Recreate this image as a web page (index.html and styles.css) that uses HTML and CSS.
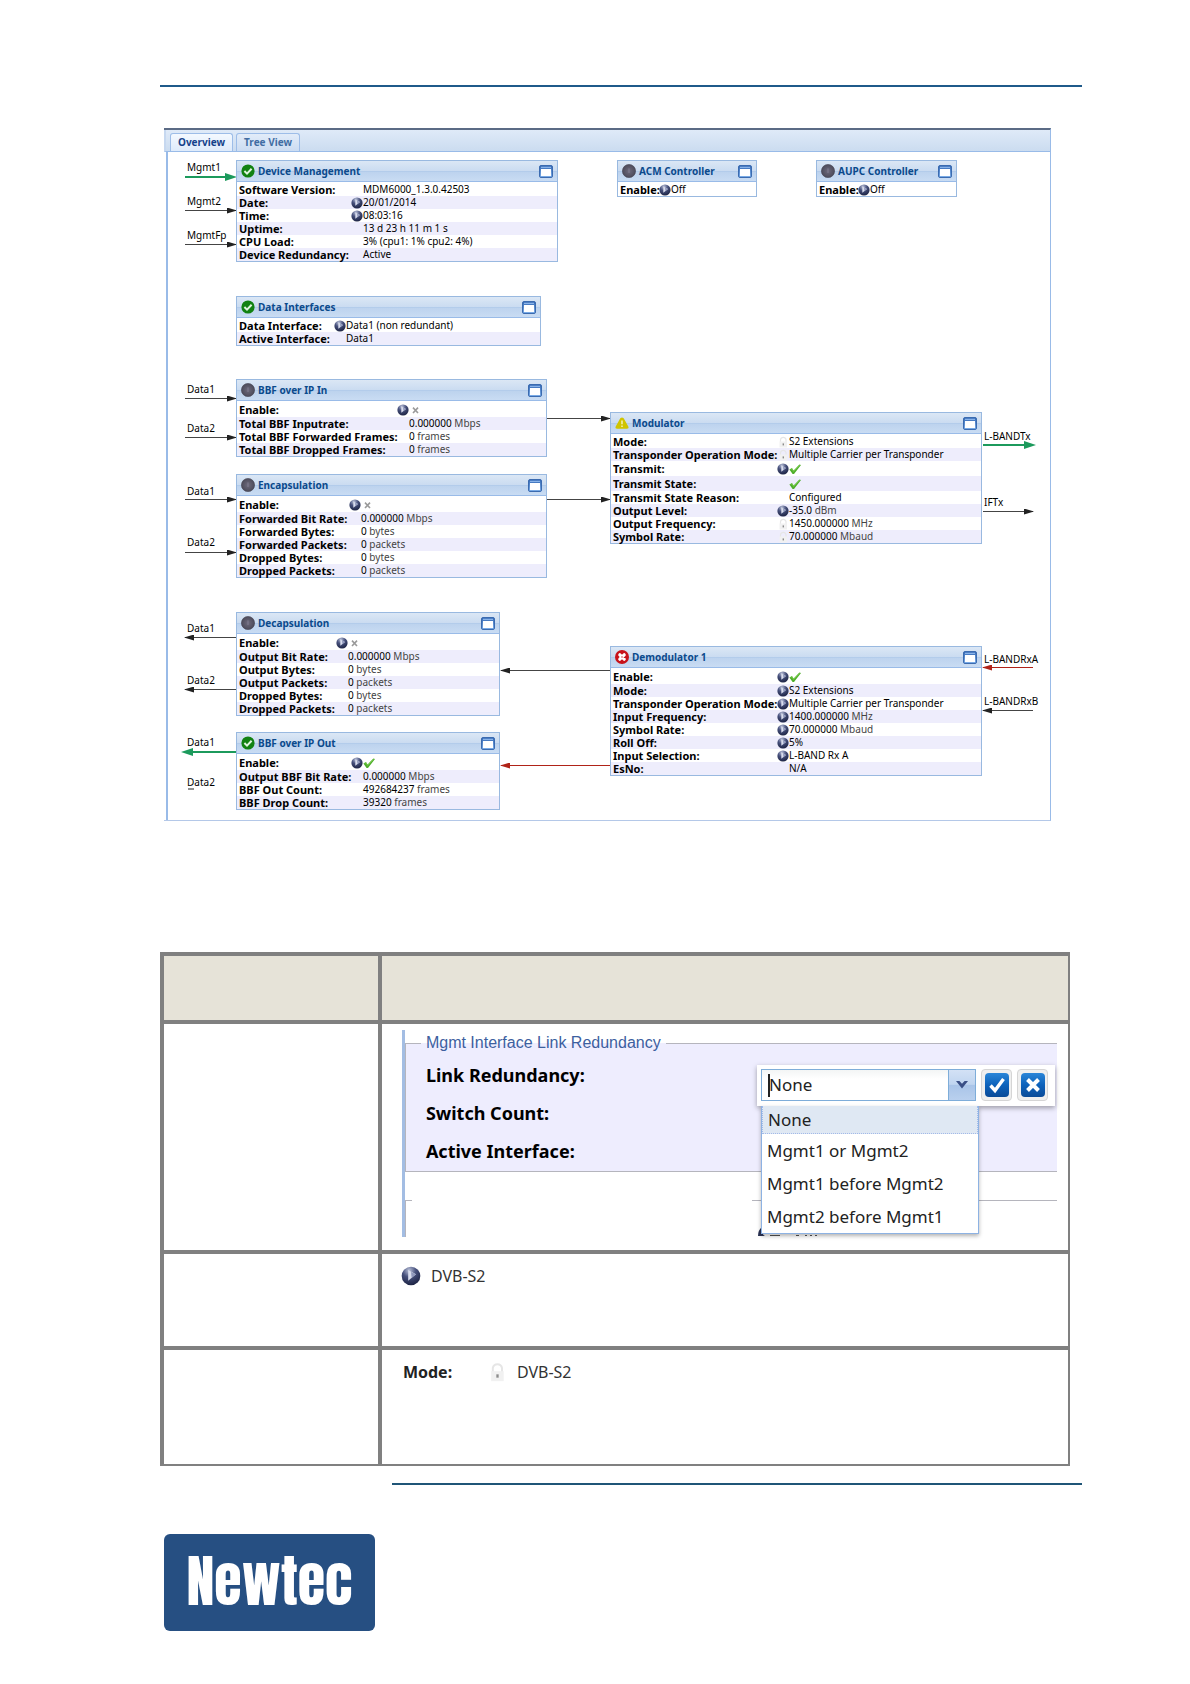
FILE: index.html
```html
<!DOCTYPE html>
<html lang="en">

<head>
    <meta charset="UTF-8">
    <meta name="viewport" content="width=device-width, initial-scale=1.0">
    <title>Newtec MDM6000 - Overview</title>
    <link rel="stylesheet" href="styles.css">
</head>

<body>
    <!-- shared icons -->
    <svg class="icon_defs" aria-hidden="true">
        <defs>
            <linearGradient id="gWin" x1="0" y1="0" x2="0" y2="1">
                <stop offset="0" stop-color="#3468b4" />
                <stop offset="1" stop-color="#7fb0ea" />
            </linearGradient>
            <radialGradient id="gBall" cx="0.4" cy="0.2" r="0.8">
                <stop offset="0" stop-color="#b9c0d8" />
                <stop offset="0.45" stop-color="#46507c" />
                <stop offset="1" stop-color="#1d2444" />
            </radialGradient>
            <radialGradient id="gOff" cx="0.5" cy="0.5" r="0.5">
                <stop offset="0" stop-color="#6d6a7c" />
                <stop offset="1" stop-color="#4d4b5a" />
            </radialGradient>
            <linearGradient id="gBtn" x1="0" y1="0" x2="0" y2="1">
                <stop offset="0" stop-color="#2a86d8" />
                <stop offset="0.5" stop-color="#0d62bb" />
                <stop offset="1" stop-color="#0a4b98" />
            </linearGradient>
            <symbol id="ok" viewBox="0 0 14 14">
                <circle cx="7" cy="7" r="6.6" fill="#128212" />
                <path d="M3.4 7 L6 9.6 L10.6 4.8" fill="none" stroke="#dff5df" stroke-width="2" />
            </symbol>
            <symbol id="off" viewBox="0 0 14 14">
                <circle cx="7" cy="7" r="6.6" fill="url(#gOff)" stroke="#474554" stroke-width="0.6" />
                <path d="M7 4.4 V9" stroke="#807d90" stroke-width="1" />
            </symbol>
            <symbol id="warn" viewBox="0 0 16 14">
                <path d="M8 0.6 C9.2 0.6 10 1.4 10.6 2.6 L15.2 11 C15.9 12.6 15.2 13.6 13.6 13.6 H2.4 C0.8 13.6 0.1 12.6 0.8 11 L5.4 2.6 C6 1.4 6.8 0.6 8 0.6 Z" fill="#d0c400" />
                <path d="M8 4 V8.4 M8 9.8 V11.6" stroke="#f4efb0" stroke-width="1.8" />
            </symbol>
            <symbol id="err" viewBox="0 0 14 14">
                <circle cx="7" cy="7" r="7" fill="#c8131b" />
                <path d="M4.8 4.8 L9.2 9.2 M9.2 4.8 L4.8 9.2" stroke="#fff" stroke-width="3.2" stroke-linecap="round" />
                <circle cx="7" cy="7" r="1" fill="#e58a8e" />
            </symbol>
            <symbol id="win" viewBox="0 0 14 13">
                <rect x="0.5" y="0.5" width="13" height="12" rx="1.5" fill="url(#gWin)" stroke="#3b6bb0" />
                <rect x="2" y="4" width="10" height="7" fill="#fff" />
                <path d="M2 2.3 H12" stroke="#9cc4f4" stroke-width="1" />
            </symbol>
            <symbol id="play" viewBox="0 0 12 12">
                <circle cx="6" cy="6" r="5.6" fill="url(#gBall)" />
                <path d="M4.3 2.4 L9 5 L4.3 8.8 Z" fill="#d9dded" />
                <path d="M6 3.6 L9 5 L6.4 7 Z" fill="#8f98bb" />
            </symbol>
            <symbol id="lock" viewBox="0 0 12 12">
                <path d="M3.5 6 V3.6 A2.8 2.8 0 0 1 9 3.6 V6" fill="none" stroke="#e6e6e6" stroke-width="1.2" />
                <rect x="2.5" y="5.5" width="7.5" height="6" fill="#f1f1f1" />
                <rect x="5.6" y="7.4" width="1.4" height="2" fill="#8c8c8c" />
            </symbol>
            <symbol id="tick" viewBox="0 0 12 12">
                <path d="M0.4 6.4 L3 5 L4.6 7.4 L10.4 1.4 L12 2 L5 11 L3.6 11 Z" fill="#4fae2b" />
                <path d="M1.6 6.4 L2.9 5.8 L4.6 8.4 L10.6 2.2" fill="none" stroke="#7fd050" stroke-width="0.8" />
            </symbol>
            <symbol id="cross" viewBox="0 0 12 12">
                <path d="M4 3.6 L9 9 M9 3.6 L4 9" stroke="#9a9a9a" stroke-width="1.6" />
            </symbol>
        </defs>
    </svg>

    <header class="page_head"></header>

    <main>
        <section class="device">
            <nav class="tabs">
                <a class="tab on" href="#overview">Overview</a>
                <a class="tab" href="#tree">Tree View</a>
            </nav>

            <div class="canvas" id="overview">
                <svg class="links" aria-hidden="true">
                    <defs>
                        <marker id="aBlack" markerUnits="userSpaceOnUse" markerWidth="10" markerHeight="6" refX="9" refY="3" orient="auto">
                            <path d="M0 0 L10 3 L0 6 Z" fill="#222" />
                        </marker>
                        <marker id="aRed" markerUnits="userSpaceOnUse" markerWidth="10" markerHeight="6" refX="9" refY="3" orient="auto">
                            <path d="M0 0 L10 3 L0 6 Z" fill="#b02318" />
                        </marker>
                        <marker id="aGreen" markerUnits="userSpaceOnUse" markerWidth="12" markerHeight="8" refX="8" refY="4" orient="auto">
                            <path d="M0 0 L12 4 L0 8 Z" fill="#1c9a5c" />
                        </marker>
                    </defs>
                    <!-- management ports -->
                    <path class="link green" d="M17 25 H65" />
                    <path class="link" d="M17 58 H68" />
                    <path class="link" d="M17 92 H68" />
                    <text x="19" y="19">Mgmt1</text>
                    <text x="19" y="53">Mgmt2</text>
                    <text x="19" y="87">MgmtFp</text>
                    <!-- data in -->
                    <path class="link" d="M17 246 H68" />
                    <path class="link" d="M17 285 H68" />
                    <path class="link" d="M17 347 H68" />
                    <path class="link" d="M17 400 H68" />
                    <text x="19" y="241">Data1</text>
                    <text x="19" y="280">Data2</text>
                    <text x="19" y="343">Data1</text>
                    <text x="19" y="394">Data2</text>
                    <!-- data out -->
                    <path class="link" d="M68 485 H17" />
                    <path class="link" d="M68 537 H17" />
                    <path class="link green" d="M68 600 H17" />
                    <path class="dash" d="M20 637 H26" />
                    <text x="19" y="480">Data1</text>
                    <text x="19" y="532">Data2</text>
                    <text x="19" y="594">Data1</text>
                    <text x="19" y="634">Data2</text>
                    <!-- between blocks -->
                    <path class="link" d="M379 266 H442" />
                    <path class="link" d="M379 347 H442" />
                    <path class="link" d="M442 518 H333" />
                    <path class="link red" d="M442 613 H333" />
                    <!-- RF side -->
                    <path class="link green" d="M815 293 H864" />
                    <path class="link" d="M815 359 H865" />
                    <path class="link red" d="M865 515 H815" />
                    <path class="link" d="M865 558 H815" />
                    <text x="816" y="288">L-BANDTx</text>
                    <text x="816" y="354">IFTx</text>
                    <text x="816" y="511">L-BANDRxA</text>
                    <text x="816" y="553">L-BANDRxB</text>
                </svg>

                <article class="node device_mgmt">
                    <h2><svg class="state"><use href="#ok" /></svg>Device Management<button aria-label="Open Device Management"><svg><use href="#win" /></svg></button></h2>
                    <table>
                        <tr><th scope="row">Software Version:</th><td class="ic"></td><td>MDM6000_1.3.0.42503</td></tr>
                        <tr><th scope="row">Date:</th><td class="ic"><svg><use href="#play" /></svg></td><td>20/01/2014</td></tr>
                        <tr><th scope="row">Time:</th><td class="ic"><svg><use href="#play" /></svg></td><td>08:03:16</td></tr>
                        <tr><th scope="row">Uptime:</th><td class="ic"></td><td>13 d 23 h 11 m 1 s</td></tr>
                        <tr><th scope="row">CPU Load:</th><td class="ic"></td><td>3% (cpu1: 1% cpu2: 4%)</td></tr>
                        <tr><th scope="row">Device Redundancy:</th><td class="ic"></td><td>Active</td></tr>
                    </table>
                </article>

                <article class="node acm">
                    <h2><svg class="state"><use href="#off" /></svg>ACM Controller<button aria-label="Open ACM Controller"><svg><use href="#win" /></svg></button></h2>
                    <table>
                        <tr><th scope="row">Enable:</th><td class="ic"><svg><use href="#play" /></svg></td><td>Off</td></tr>
                    </table>
                </article>

                <article class="node aupc">
                    <h2><svg class="state"><use href="#off" /></svg>AUPC Controller<button aria-label="Open AUPC Controller"><svg><use href="#win" /></svg></button></h2>
                    <table>
                        <tr><th scope="row">Enable:</th><td class="ic"><svg><use href="#play" /></svg></td><td>Off</td></tr>
                    </table>
                </article>

                <article class="node data_if">
                    <h2><svg class="state"><use href="#ok" /></svg>Data Interfaces<button aria-label="Open Data Interfaces"><svg><use href="#win" /></svg></button></h2>
                    <table>
                        <tr><th scope="row">Data Interface:</th><td class="ic"><svg><use href="#play" /></svg></td><td>Data1 (non redundant)</td></tr>
                        <tr><th scope="row">Active Interface:</th><td class="ic"></td><td>Data1</td></tr>
                    </table>
                </article>

                <article class="node bbf_in">
                    <h2><svg class="state"><use href="#off" /></svg>BBF over IP In<button aria-label="Open BBF over IP In"><svg><use href="#win" /></svg></button></h2>
                    <table>
                        <tr class="tall"><th scope="row">Enable:</th><td class="ic"><svg><use href="#play" /></svg></td><td><svg><use href="#cross" /></svg></td></tr>
                        <tr><th scope="row">Total BBF Inputrate:</th><td class="ic"></td><td>0.000000 <i>Mbps</i></td></tr>
                        <tr><th scope="row">Total BBF Forwarded Frames:</th><td class="ic"></td><td>0 <i>frames</i></td></tr>
                        <tr><th scope="row">Total BBF Dropped Frames:</th><td class="ic"></td><td>0 <i>frames</i></td></tr>
                    </table>
                </article>

                <article class="node encap">
                    <h2><svg class="state"><use href="#off" /></svg>Encapsulation<button aria-label="Open Encapsulation"><svg><use href="#win" /></svg></button></h2>
                    <table>
                        <tr class="tall"><th scope="row">Enable:</th><td class="ic"><svg><use href="#play" /></svg></td><td><svg><use href="#cross" /></svg></td></tr>
                        <tr><th scope="row">Forwarded Bit Rate:</th><td class="ic"></td><td>0.000000 <i>Mbps</i></td></tr>
                        <tr><th scope="row">Forwarded Bytes:</th><td class="ic"></td><td>0 <i>bytes</i></td></tr>
                        <tr><th scope="row">Forwarded Packets:</th><td class="ic"></td><td>0 <i>packets</i></td></tr>
                        <tr><th scope="row">Dropped Bytes:</th><td class="ic"></td><td>0 <i>bytes</i></td></tr>
                        <tr><th scope="row">Dropped Packets:</th><td class="ic"></td><td>0 <i>packets</i></td></tr>
                    </table>
                </article>

                <article class="node decap">
                    <h2><svg class="state"><use href="#off" /></svg>Decapsulation<button aria-label="Open Decapsulation"><svg><use href="#win" /></svg></button></h2>
                    <table>
                        <tr class="tall"><th scope="row">Enable:</th><td class="ic"><svg><use href="#play" /></svg></td><td><svg><use href="#cross" /></svg></td></tr>
                        <tr><th scope="row">Output Bit Rate:</th><td class="ic"></td><td>0.000000 <i>Mbps</i></td></tr>
                        <tr><th scope="row">Output Bytes:</th><td class="ic"></td><td>0 <i>bytes</i></td></tr>
                        <tr><th scope="row">Output Packets:</th><td class="ic"></td><td>0 <i>packets</i></td></tr>
                        <tr><th scope="row">Dropped Bytes:</th><td class="ic"></td><td>0 <i>bytes</i></td></tr>
                        <tr><th scope="row">Dropped Packets:</th><td class="ic"></td><td>0 <i>packets</i></td></tr>
                    </table>
                </article>

                <article class="node bbf_out">
                    <h2><svg class="state"><use href="#ok" /></svg>BBF over IP Out<button aria-label="Open BBF over IP Out"><svg><use href="#win" /></svg></button></h2>
                    <table>
                        <tr class="tall"><th scope="row">Enable:</th><td class="ic"><svg><use href="#play" /></svg></td><td><svg><use href="#tick" /></svg></td></tr>
                        <tr><th scope="row">Output BBF Bit Rate:</th><td class="ic"></td><td>0.000000 <i>Mbps</i></td></tr>
                        <tr><th scope="row">BBF Out Count:</th><td class="ic"></td><td>492684237 <i>frames</i></td></tr>
                        <tr><th scope="row">BBF Drop Count:</th><td class="ic"></td><td>39320 <i>frames</i></td></tr>
                    </table>
                </article>

                <article class="node modulator">
                    <h2><svg class="state"><use href="#warn" /></svg>Modulator<button aria-label="Open Modulator"><svg><use href="#win" /></svg></button></h2>
                    <table>
                        <tr><th scope="row">Mode:</th><td class="ic"><svg><use href="#lock" /></svg></td><td>S2 Extensions</td></tr>
                        <tr><th scope="row">Transponder Operation Mode:</th><td class="ic"><svg><use href="#lock" /></svg></td><td>Multiple Carrier per Transponder</td></tr>
                        <tr class="tall"><th scope="row">Transmit:</th><td class="ic"><svg><use href="#play" /></svg></td><td><svg><use href="#tick" /></svg></td></tr>
                        <tr class="tall"><th scope="row">Transmit State:</th><td class="ic"></td><td><svg><use href="#tick" /></svg></td></tr>
                        <tr><th scope="row">Transmit State Reason:</th><td class="ic"></td><td>Configured</td></tr>
                        <tr><th scope="row">Output Level:</th><td class="ic"><svg><use href="#play" /></svg></td><td>-35.0 <i>dBm</i></td></tr>
                        <tr><th scope="row">Output Frequency:</th><td class="ic"><svg><use href="#lock" /></svg></td><td>1450.000000 <i>MHz</i></td></tr>
                        <tr><th scope="row">Symbol Rate:</th><td class="ic"><svg><use href="#lock" /></svg></td><td>70.000000 <i>Mbaud</i></td></tr>
                    </table>
                </article>

                <article class="node demod">
                    <h2><svg class="state"><use href="#err" /></svg>Demodulator 1<button aria-label="Open Demodulator 1"><svg><use href="#win" /></svg></button></h2>
                    <table>
                        <tr class="tall"><th scope="row">Enable:</th><td class="ic"><svg><use href="#play" /></svg></td><td><svg><use href="#tick" /></svg></td></tr>
                        <tr><th scope="row">Mode:</th><td class="ic"><svg><use href="#play" /></svg></td><td>S2 Extensions</td></tr>
                        <tr><th scope="row">Transponder Operation Mode:</th><td class="ic"><svg><use href="#play" /></svg></td><td>Multiple Carrier per Transponder</td></tr>
                        <tr><th scope="row">Input Frequency:</th><td class="ic"><svg><use href="#play" /></svg></td><td>1400.000000 <i>MHz</i></td></tr>
                        <tr><th scope="row">Symbol Rate:</th><td class="ic"><svg><use href="#play" /></svg></td><td>70.000000 <i>Mbaud</i></td></tr>
                        <tr><th scope="row">Roll Off:</th><td class="ic"><svg><use href="#play" /></svg></td><td>5%</td></tr>
                        <tr><th scope="row">Input Selection:</th><td class="ic"><svg><use href="#play" /></svg></td><td>L-BAND Rx A</td></tr>
                        <tr><th scope="row">EsNo:</th><td class="ic"></td><td>N/A</td></tr>
                    </table>
                </article>
            </div><!-- .canvas end -->
        </section><!-- .device end -->

        <table class="guide">
            <tr class="row_head">
                <th></th>
                <th></th>
            </tr>
            <tr class="row_select">
                <td></td>
                <td>
                    <div class="panel">
                        <fieldset class="redundancy">
                            <legend>Mgmt Interface Link Redundancy</legend>
                            <div class="field"><label for="link">Link Redundancy:</label></div>
                            <div class="field">Switch Count:</div>
                            <div class="field">Active Interface:</div>
                            <div class="editor">
                                <div class="combo">
                                    <input id="link" type="text" value="None">
                                    <button class="trigger" aria-label="Show options"><svg viewBox="0 0 12 8"><path d="M0 0 H3.4 L6 2.8 L8.6 0 H12 L6 7.4 Z" fill="#3a4f86" /></svg></button>
                                </div>
                                <button class="act" aria-label="Apply"><svg viewBox="0 0 24 24"><rect width="24" height="24" rx="4" fill="url(#gBtn)" /><path d="M5.5 12.5 L10 17.5 L18.5 6" fill="none" stroke="#fff" stroke-width="3.4" /></svg></button>
                                <button class="act" aria-label="Cancel"><svg viewBox="0 0 24 24"><rect width="24" height="24" rx="4" fill="url(#gBtn)" /><path d="M6.5 6.5 L17.5 17.5 M17.5 6.5 L6.5 17.5" stroke="#fff" stroke-width="4" /></svg></button>
                                <ul class="options">
                                    <li class="picked">None</li>
                                    <li>Mgmt1 or Mgmt2</li>
                                    <li>Mgmt1 before Mgmt2</li>
                                    <li>Mgmt2 before Mgmt1</li>
                                </ul>
                            </div>
                        </fieldset>
                        <fieldset class="next">
                            <legend></legend>
                            <!-- top edge of the row that is cut off under the list -->
                            <svg class="cut" viewBox="0 0 60 10" aria-hidden="true">
                                <path d="M0 9 Q0 3 4 0 V5 Q5 8 7 9 Z" fill="#2b3354" />
                                <path d="M12 8.5 H22 M38 8.5 H41 M47 8.5 H49 M52 8.5 H54 M57 8.5 H59" stroke="#555" stroke-width="1" />
                            </svg>
                        </fieldset>
                    </div>
                </td>
            </tr>
            <tr class="row_edit">
                <td></td>
                <td>
                    <div class="sample"><svg><use href="#play" /></svg>DVB-S2</div>
                </td>
            </tr>
            <tr class="row_lock">
                <td></td>
                <td>
                    <div class="sample"><b>Mode:</b><svg><use href="#lock" /></svg>DVB-S2</div>
                </td>
            </tr>
        </table>
    </main>

    <footer class="page_foot">
        <div class="logo">Newtec</div>
    </footer>
</body>

</html>
```
FILE: styles.css
```css
* {
    margin: 0;
    padding: 0;
    box-sizing: border-box;
}

body {
    padding: 85px 108px 0 160px;
    background-color: #fff;
    color: #000;
    font-family: "Noto Sans", "Open Sans", sans-serif;
    font-size: 10px;
}

li {
    list-style: none;
}

button {
    background: none;
    border: 0;
}

svg {
    display: block;
}

.icon_defs {
    position: absolute;
    width: 0;
    height: 0;
}

.page_head {
    height: 2px;
    background-color: #1f5a8a;
}

/* device overview */
.device {
    margin: 41px 31px 0 4px;
    border-top: 2px solid #5b6b85;
    border-right: 1px solid #99bbe8;
    border-bottom: 1px solid #b4c8e8;
}

.tabs {
    display: flex;
    align-items: flex-end;
    gap: 3px;
    height: 22px;
    padding-left: 4px;
    border-left: 2px solid #c6d8f0;
    border-bottom: 1px solid #99bbe8;
    background: linear-gradient(#dfeaf8, #cbdcf0);
}

.tab {
    height: 18px;
    padding: 0 7px;
    border: 1px solid #9dbde8;
    border-bottom: 0;
    border-radius: 3px 3px 0 0;
    background: linear-gradient(#e2ecf9, #cbdcf2);
    color: #416da3;
    font-weight: bold;
    line-height: 16px;
    text-decoration: none;
}

.tab.on {
    background: linear-gradient(#f4f9ff, #deebfb);
    color: #15428b;
}

.canvas {
    position: relative;
    min-height: 668px;
    margin-left: 2px;
    border-left: 2px solid #99bbe8;
    background-color: #fff;
}

.links {
    position: absolute;
    width: 100%;
    height: 100%;
}

.link {
    stroke: #444;
    stroke-width: 1;
    transform: translateY(0.5px);
    marker-end: url(#aBlack);
}

.link.green {
    stroke: #1c9a5c;
    stroke-width: 2;
    transform: none;
    marker-end: url(#aGreen);
}

.link.red {
    stroke: #b02318;
    marker-end: url(#aRed);
}

.dash {
    stroke: #222;
}

/* blocks on the canvas */
.node {
    position: absolute;
    border: 1px solid #99b9e0;
    background-color: #fff;
}

.node h2 {
    display: flex;
    align-items: center;
    gap: 3px;
    height: 21px;
    padding: 0 4px;
    border-bottom: 1px solid #99bbe8;
    background: linear-gradient(#dbe7f5, #cbdcf1 48%, #a9c5e8 49%, #bdd3ee 56%, #c9dcf3);
    color: #0b4a8c;
    font-size: 10px;
}

.node h2 button {
    margin-left: auto;
}

.node h2 button svg {
    width: 14px;
    height: 13px;
}

.node .state {
    width: 14px;
    height: 14px;
}

.node table {
    width: 100%;
    margin-top: 1px;
    border-spacing: 0;
    table-layout: fixed;
}

.node tr {
    height: 13px;
}

.node tr.tall {
    height: 15px;
}

.node tr:nth-child(even) {
    background-color: #eeedfc;
}

.node th,
.node td {
    line-height: 13px;
    text-align: left;
    white-space: nowrap;
}

.node th {
    padding-left: 2px;
    font-size: 11px;
}

.node .ic {
    width: 12px;
}

.node td svg {
    width: 12px;
    height: 12px;
}

.node i {
    color: #444;
    font-style: normal;
}

.device_mgmt { left: 68px; top: 8px; width: 322px; }
.device_mgmt th { width: 114px; }

.acm { left: 449px; top: 8px; width: 140px; }
.aupc { left: 648px; top: 8px; width: 141px; }
.acm th, .aupc th { width: 41px; }

.data_if { left: 68px; top: 144px; width: 305px; }
.data_if th { width: 97px; }

.bbf_in { left: 68px; top: 227px; width: 311px; }
.bbf_in th { width: 160px; }

.encap { left: 68px; top: 322px; width: 311px; }
.encap th { width: 112px; }

.decap { left: 68px; top: 460px; width: 264px; }
.decap th { width: 99px; }

.bbf_out { left: 68px; top: 580px; width: 264px; }
.bbf_out th { width: 114px; }

.modulator { left: 442px; top: 260px; width: 372px; }
.demod { left: 442px; top: 494px; width: 372px; }
.modulator th, .demod th { width: 166px; }

/* guide table */
.guide {
    width: calc(100% - 12px);
    margin-top: 131px;
    border-right: 2px solid #808080;
    border-bottom: 2px solid #808080;
    border-spacing: 0;
}

.guide > tbody > tr > th,
.guide > tbody > tr > td {
    border-top: 4px solid #808080;
    border-left: 4px solid #808080;
    vertical-align: top;
}

.guide > tbody > tr > :first-child {
    width: 24%;
}

.row_head th {
    background-color: #e6e3d8;
}

.row_head { height: 68px; }
.row_select { height: 230px; }
.row_edit { height: 96px; }
.row_lock { height: 118px; }

.panel {
    margin: 6px 11px 0 20px;
    padding-top: 4px;
    border-left: 3px solid #a3bde3;
    font-size: 17px;
}

.panel fieldset {
    border: 1px solid #b5b5bd;
    border-right: 0;
}

.redundancy {
    position: relative;
    padding: 4px 0 1px 15px;
    background-color: #eeedfe;
}

.redundancy legend {
    padding: 0 5px;
    color: #3d5f9f;
    font-family: "Liberation Sans", sans-serif;
    font-size: 16px;
    line-height: 18px;
}

.field {
    padding-left: 5px;
    font-size: 18px;
    font-weight: bold;
    line-height: 38px;
}

.editor {
    position: absolute;
    top: 13px;
    right: 2px;
    display: flex;
    align-items: center;
    gap: 5px;
    padding: 4px 7px 5px 4px;
    background-color: #fff;
    box-shadow: 0 2px 5px rgba(0, 0, 0, .35);
}

.combo {
    position: relative;
    display: flex;
    width: 215px;
    height: 32px;
    border: 1px solid #7eadd9;
}

/* text cursor in the open editor */
.combo::before {
    content: "";
    position: absolute;
    left: 6px;
    top: 4px;
    width: 2px;
    height: 23px;
    background-color: #222;
}

.combo input {
    flex: 1;
    min-width: 0;
    padding: 0 0 2px 7px;
    border: 0;
    background: linear-gradient(#f3f5f5, #fff 30%);
    color: #222;
    font: inherit;
}

.trigger {
    display: flex;
    align-items: center;
    justify-content: center;
    width: 27px;
    border-left: 1px solid #7eadd9;
    background: linear-gradient(#d3e1f5, #c0d5f0 48%, #a9c4e8 50%, #b9d0ee);
}

.trigger svg {
    width: 12px;
    height: 8px;
}

.act {
    display: flex;
    align-items: center;
    justify-content: center;
    width: 31px;
    height: 32px;
    border: 1px solid #d5d5d5;
    border-radius: 4px;
    background-color: #efefef;
}

.act svg {
    width: 24px;
    height: 24px;
}

.options {
    position: absolute;
    left: 4px;
    top: 100%;
    width: 218px;
    border: 1px solid #8db2e3;
    border-top: 0;
    background-color: #fff;
    box-shadow: 0 2px 4px rgba(0, 0, 0, .3);
    color: #222;
}

.options li {
    padding-left: 5px;
    line-height: 33px;
}

.options .picked {
    border: 1px dotted #a3bae9;
    border-top: 0;
    background-color: #dfe8f3;
    line-height: 27px;
}

.panel .next {
    display: flex;
    align-items: flex-end;
    justify-content: flex-end;
    height: 45px;
    margin-top: 20px;
    padding: 0 239px 0 6px;
    border-bottom: 0;
}

.next legend {
    width: 340px;
    height: 16px;
}

.next .cut {
    width: 60px;
    height: 10px;
}

.sample {
    display: flex;
    align-items: center;
    padding: 9px 0 0 19px;
    color: #333;
    font-size: 16px;
    line-height: 26px;
}

.sample svg {
    width: 20px;
    height: 20px;
    margin-right: 10px;
}

.sample b {
    width: 86px;
    padding-left: 2px;
    color: #222;
}

/* footer */
.page_foot {
    margin: 17px 0 0 232px;
    border-top: 2px solid #1f5577;
}

.logo {
    width: 211px;
    height: 97px;
    margin: 49px 0 0 -228px;
    border-radius: 6px;
    background-color: #264f82;
    color: #fff;
    font-family: Impact, Anton, "Roboto Condensed", "Open Sans Condensed", Roboto, sans-serif;
    font-size: 56px;
    font-weight: normal;
    line-height: 94px;
    text-align: center;
}
```
